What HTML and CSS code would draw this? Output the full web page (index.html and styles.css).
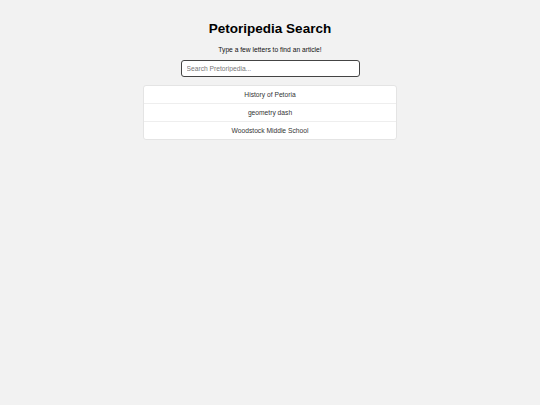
FILE: index.html
```html
<!DOCTYPE html>
<html lang="en">
<head>
    <meta charset="UTF-8">
    <meta name="viewport" content="width=device-width, initial-scale=1.0">
    <title>Petoripedia Search</title>
    <link rel="stylesheet" href="styles.css">
</head>
<body>
    <div class="page">
        <h1>Petoripedia Search</h1>
        <p class="hint">Type a few letters to find an article!</p>
        <input type="text" class="search" placeholder="Search Pretoripedia...">
        <ul class="results">
            <li>History of Petoria</li>
            <li>geometry dash</li>
            <li>Woodstock Middle School</li>
        </ul>
    </div>
</body>
</html>
```

FILE: styles.css
```css
* {
    margin: 0;
    padding: 0;
    box-sizing: border-box;
    font-family: 'Liberation Sans', Arial, sans-serif;
}

body {
    background-color: #f2f2f2;
    width: 100vw;
    height: 100vh;
}

.page {
    display: flex;
    flex-direction: column;
    align-items: center;
    padding-top: 21px;
}

h1 {
    font-size: 13.5px;
    line-height: 16px;
    font-weight: bold;
    color: #000;
}

.hint {
    margin-top: 8px;
    font-size: 6.7px;
    line-height: 9px;
    color: #111;
}

.search {
    margin-top: 6px;
    width: 179px;
    height: 17px;
    padding: 0 5px;
    border: 1.5px solid #444;
    border-radius: 3px;
    font-size: 6.7px;
    background-color: #fff;
    outline: none;
}

.search::placeholder {
    color: #777;
}

.results {
    list-style: none;
    margin-top: 8px;
    width: 254px;
    background-color: #fff;
    border: 1px solid #e4e4e4;
    border-radius: 3px;
}

.results li {
    height: 18px;
    line-height: 17px;
    text-align: center;
    font-size: 6.7px;
    color: #333;
    border-bottom: 1px solid #eee;
}

.results li:last-child {
    height: 17px;
    border-bottom: none;
}
```
